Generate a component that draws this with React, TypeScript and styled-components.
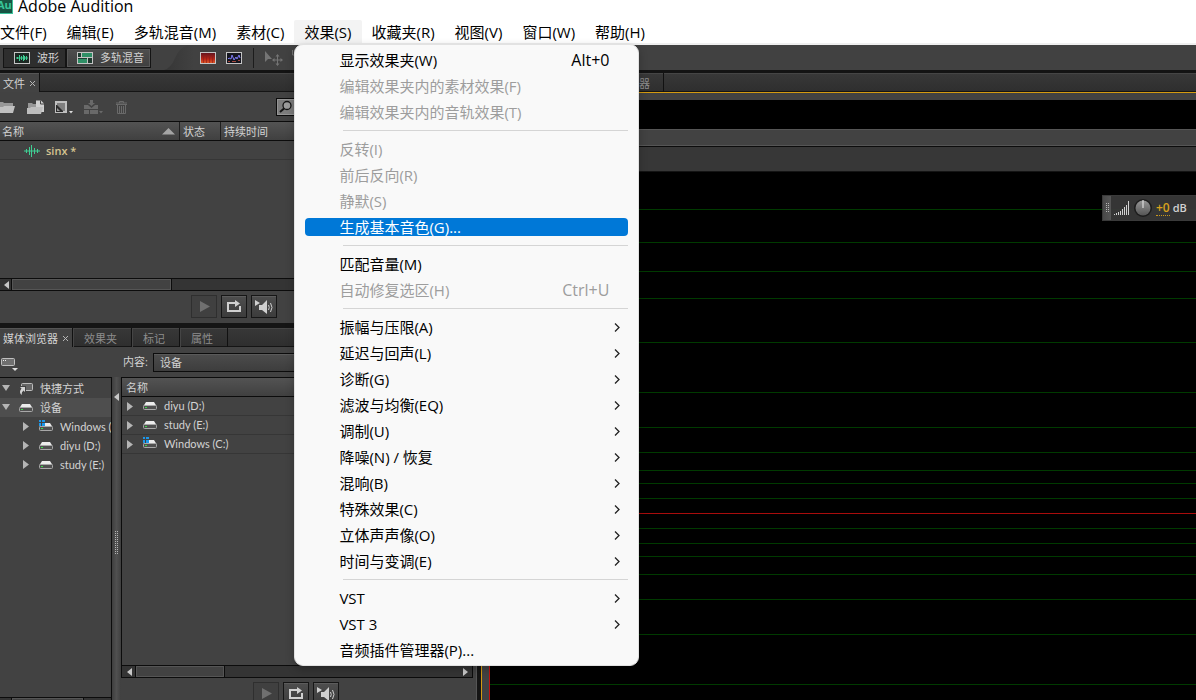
import React from "react";
import styled, { createGlobalStyle, css } from "styled-components";

const GlobalStyle = createGlobalStyle`
  *, *::before, *::after { box-sizing: border-box; }
  body {
    margin: 0;
    background: #424242;
    color: #d2d2d2;
    font: 11px/18px "Open Sans", "Noto Sans CJK SC", sans-serif;
  }
  button, input, select {
    font: inherit;
    color: inherit;
    margin: 0;
    padding: 0;
    border: 0;
    background: none;
  }
  svg { display: block; flex: none; }
  ul { list-style: none; margin: 0; padding: 0; }
`;

const Page = styled.div`
  display: flex;
  flex-direction: column;
  height: 100vh;
  overflow: hidden;
`;

/* Window title and menu bar */

const TitleBar = styled.header`
  display: flex;
  align-items: flex-start;
  gap: 5px;
  flex: none;
  height: 20px;
  background: #fff;
  color: #000;
`;

const AppLogo = styled.svg`
  margin-left: -7px;
`;

const AppName = styled.h1`
  margin: 0;
  font-size: 16px;
  font-weight: 400;
  line-height: 12px;
`;

const MenuBar = styled.nav`
  position: relative;
  z-index: 10;
  flex: none;
  height: 25px;
  background: #fff;
  border-bottom: 2px solid #efefef;
  color: #000;
  font-size: 15px;
`;

const MenuBarList = styled.ul`
  display: flex;
  margin-left: -10px;
`;

const MenuBarItem = styled.li`
  position: relative;
`;

const MenuBarButton = styled.button<{ $open?: boolean }>`
  display: block;
  height: 23px;
  padding: 0 10px;
  line-height: 24px;
  white-space: nowrap;
  border-radius: 2px 2px 0 0;
  background: ${(p) => (p.$open ? "#f3f3f3" : "transparent")};
`;

const DropMenu = styled.ul`
  position: absolute;
  top: 24px;
  left: 0;
  width: 345px;
  padding: 2px 10px;
  border: 1px solid #e2e2e2;
  border-radius: 9px;
  background: #f9f9f9;
  box-shadow: 0 3px 8px rgba(0, 0, 0, 0.25);
`;

const DropRow = styled.li`
  display: flex;
  align-items: center;
  height: 26px;
`;

const DropButton = styled.button<{ $selected?: boolean }>`
  display: flex;
  align-items: center;
  justify-content: space-between;
  width: 100%;
  height: 18px;
  padding: 0 19px 0 34px;
  border-radius: 4px;
  white-space: nowrap;
  &:disabled { color: #9d9d9d; }
  ${(p) => p.$selected && css`
    background: #0078d7;
    color: #fff;
  `}
`;

const ShortcutKeys = styled.span`
  font-size: 16px;
`;

const SubmenuArrow = styled.svg`
  margin-right: -12px;
`;

const DropDivider = styled.li`
  height: 11px;
  padding: 5px 0 5px 38px;
  &::before {
    content: "";
    display: block;
    height: 1px;
    background: #d5d5d5;
  }
`;

/* Application tool bar */

const ToolBar = styled.div`
  display: flex;
  align-items: center;
  flex: none;
  height: 28px;
  padding: 0 3px;
  border-bottom: 3px solid #131313;
  background: #414141;
`;

const ModeGroup = styled.div`
  display: flex;
  align-items: center;
  align-self: stretch;
`;

const ModeButton = styled.button<{ $active?: boolean }>`
  display: flex;
  align-items: center;
  gap: 7px;
  height: 20px;
  padding: 0 6px 0 10px;
  border: 1px solid #141414;
  background: ${(p) => (p.$active ? "#2e2e2e" : "linear-gradient(#4e4e4e, #3f3f3f)")};
  box-shadow: ${(p) => (p.$active ? "none" : "inset 0 0 0 1px #585858")};
`;

const ToolSlope = styled.svg`
  margin: 0 6px 0 13px;
`;

const ToolButton = styled.button`
  display: flex;
  align-items: center;
  margin-right: 10px;
`;

const ToolDivider = styled.span`
  width: 1px;
  height: 20px;
  margin: 0 11px 0 1px;
  background: #1c1c1c;
`;

/* Panels */

const Workspace = styled.main`
  display: flex;
  flex: 1;
  min-height: 0;
`;

const SideColumn = styled.div`
  display: flex;
  flex-direction: column;
  flex: 0 0 481px;
  border-right: 4px solid #151515;
  box-shadow: inset -1px 0 #555;
`;

const TabStrip = styled.div`
  display: flex;
  flex: none;
  height: 19px;
  background: linear-gradient(#383838, #2e2e2e);
  box-shadow: inset 0 1px #454545, inset 0 -1px #151515;
`;

const Tab = styled.button<{ $active?: boolean; $width: number }>`
  display: flex;
  align-items: center;
  gap: 4px;
  width: ${(p) => p.$width}px;
  padding: 2px 0 0 ${(p) => (p.$active ? 3 : 11)}px;
  border-right: 1px solid #111;
  color: ${(p) => (p.$active ? "#d2d2d2" : "#8d8d8d")};
  white-space: nowrap;
  ${(p) => p.$active
    ? css`background: #434343; box-shadow: inset 0 1px #555;`
    : css`box-shadow: inset 1px 1px #454545, inset 0 -1px #151515;`}
`;

const FilesPanel = styled.section`
  display: flex;
  flex-direction: column;
  flex: none;
  height: 255px;
  border-bottom: 5px solid #151515;
`;

const FilesTools = styled.div`
  display: flex;
  align-items: center;
  flex: none;
  height: 29px;
  padding-top: 1px;
`;

const IconButton = styled.button<{ $gap?: number }>`
  margin-right: ${(p) => p.$gap ?? 0}px;
`;

const SearchBox = styled.label`
  display: flex;
  align-items: center;
  width: 197px;
  height: 18px;
  margin: 0 4px 0 auto;
  border: 1px solid #0c0c0c;
  background: #7d7d7d;
  box-shadow: inset 0 0 0 1px #959595;
  input { flex: 1; min-width: 0; outline: 0; color: #111; }
`;

const DataTable = styled.table`
  width: 100%;
  border-collapse: separate;
  border-spacing: 0;
  table-layout: fixed;
`;

const HeadCell = styled.th<{ $width?: number; $inset?: number }>`
  width: ${(p) => (p.$width ? `${p.$width}px` : "auto")};
  height: 20px;
  padding: 1px 4px 0 ${(p) => p.$inset ?? 4}px;
  border-top: 1px solid #0c0c0c;
  border-bottom: 1px solid #0c0c0c;
  background: linear-gradient(#535353, #404040);
  font-weight: 400;
  line-height: 17px;
  text-align: left;
  & + & { box-shadow: inset 1px 0 #1f1f1f; }
`;

const HeadContent = styled.span`
  display: flex;
  align-items: center;
  justify-content: space-between;
`;

const DataCell = styled.td`
  height: 19px;
  padding: 0;
  border-bottom: 1px solid #363636;
`;

const FileName = styled.span`
  display: flex;
  align-items: center;
  gap: 6px;
  padding: 1px 0 0 24px;
  color: #d5c591;
  font-weight: 600;
  line-height: 17px;
`;

const driveText = css`
  display: flex;
  align-items: center;
  gap: 9px;
  font-family: Lato, "Noto Sans CJK SC", sans-serif;
  white-space: nowrap;
  svg + svg { margin-right: -3px; }
`;

const DriveName = styled.span`
  ${driveText}
  padding-left: 3px;
`;

const Filler = styled.div`
  flex: 1;
  min-height: 0;
`;

const ScrollTrack = styled.div`
  display: flex;
  align-items: center;
  flex: none;
  height: 13px;
  border-top: 1px solid #0c0c0c;
  border-bottom: 1px solid #0c0c0c;
  background: #343434;
`;

const ScrollArrow = styled.button<{ $width: number; $end?: boolean }>`
  display: flex;
  align-items: center;
  justify-content: center;
  width: ${(p) => p.$width}px;
  height: 11px;
  margin-left: ${(p) => (p.$end ? "auto" : "0")};
`;

const ScrollThumb = styled.div<{ $width: number }>`
  width: ${(p) => p.$width}px;
  height: 11px;
  border: 1px solid #555;
  background: #424242;
  outline: 1px solid #0c0c0c;
`;

const Transport = styled.div<{ $start: number }>`
  display: flex;
  gap: 4px;
  flex: none;
  height: 32px;
  padding: 4px 0 0 ${(p) => p.$start}px;
`;

const TransportButton = styled.button`
  display: flex;
  align-items: center;
  justify-content: center;
  width: 26px;
  height: 23px;
  border: 1px solid #161616;
  background: linear-gradient(#4e4e4e, #3c3c3c);
  box-shadow: inset 0 1px #5c5c5c;
  &:disabled {
    border-color: #2f2f2f;
    background: #404040;
    box-shadow: none;
  }
`;

const MediaPanel = styled.section`
  display: flex;
  flex-direction: column;
  flex: 1;
  min-height: 0;
`;

const MediaTools = styled.div`
  display: flex;
  align-items: center;
  flex: none;
  height: 30px;
  padding-right: 4px;
  svg { margin: 4px 105px 0 0; }
  label { width: 30px; white-space: nowrap; }
`;

const PlaceSelect = styled.select`
  flex: 1;
  height: 19px;
  padding-left: 6px;
  appearance: none;
  border: 1px solid #0c0c0c;
  border-radius: 0;
  background: linear-gradient(#4c4c4c, #3d3d3d);
  box-shadow: inset 0 1px #5a5a5a;
`;

const MediaBody = styled.div`
  display: flex;
  flex: 1;
  min-height: 0;
  margin-bottom: -10px;
  padding-right: 4px;
`;

const TreeColumn = styled.div`
  display: flex;
  flex-direction: column;
  flex: 0 0 112px;
  padding-top: 1px;
  border-top: 1px solid #0c0c0c;
  border-right: 1px solid #0c0c0c;
  overflow: hidden;
`;

const TreeRow = styled.li<{ $depth?: number; $selected?: boolean }>`
  ${driveText}
  height: 19px;
  padding-left: ${(p) => (p.$depth ? 21 : 1)}px;
  background: ${(p) => (p.$selected ? "#4e4e4e" : "transparent")};
`;

const Splitter = styled.div`
  display: flex;
  flex-direction: column;
  align-items: center;
  gap: 130px;
  flex: 0 0 9px;
  padding-top: 16px;
  background: linear-gradient(90deg, #3e3e3e, #505050 50%, #404040);
`;

const ListColumn = styled.div`
  display: flex;
  flex-direction: column;
  flex: 1;
  min-width: 0;
`;

const ListBox = styled.div`
  display: flex;
  flex-direction: column;
  flex: 1;
  min-height: 0;
  border-left: 1px solid #0c0c0c;
  border-right: 1px solid #0c0c0c;
`;

/* Editor */

const EditorColumn = styled.section`
  display: flex;
  flex-direction: column;
  flex: 1;
  min-width: 0;
`;

const EditorBody = styled.div`
  display: flex;
  flex-direction: column;
  flex: 1;
  min-height: 0;
  padding: 7px 0 0 7px;
  border: solid #d39a10;
  border-width: 1px 0 0 1px;
`;

const Overview = styled.div`
  flex: none;
  height: 29px;
  background: #000;
`;

const RangeBar = styled.div`
  flex: none;
  height: 18px;
  border-top: 1px solid #555;
  border-bottom: 1px solid #0c0c0c;
  background: #424242;
  box-shadow: inset 0 -1px #555;
`;

const TimeRuler = styled.div`
  flex: none;
  height: 25px;
  border-bottom: 1px solid #141414;
  background: #373737;
`;

const WaveArea = styled.div`
  position: relative;
  flex: 1;
  min-height: 0;
  border-left: 1px solid #c01010;
  background: #000;
  overflow: hidden;
`;

const GainHud = styled.div`
  position: absolute;
  top: 23px;
  right: 0;
  display: flex;
  align-items: center;
  gap: 3px;
  width: 94px;
  height: 26px;
  border: 1px solid #3a3a3a;
  border-right: 0;
  background: rgba(56, 56, 56, 0.94);
  font-weight: 600;
`;

const HudHandle = styled.div`
  display: flex;
  align-items: center;
  justify-content: center;
  width: 8px;
  height: 24px;
  background: linear-gradient(90deg, #484848, #565656);
`;

const Gain = styled.button`
  border-bottom: 1px dotted #c9991c;
  color: #d9a21c;
  font-size: 12px;
  line-height: 14px;
`;

/* Icons */

const Close = () => (
  <svg width="7" height="7" viewBox="0 0 7 7" stroke="#b5b5b5" strokeWidth="1" fill="none">
    <path d="M1 1l5 5M6 1l-5 5" />
  </svg>
);

const WaveIcon = () => (
  <svg width="16" height="12" viewBox="0 0 16 12">
    <rect x=".5" y=".5" width="15" height="11" fill="#1c2823" stroke="#c4c4c4" />
    <path d="M2 6h12M3.500 5v2M5.500 3v6M7.500 4v4M9.500 3v6M10.500 4v4M12.500 4v4" stroke="#3fcf94" fill="none" />
  </svg>
);

const MultitrackIcon = () => (
  <svg width="16" height="12" viewBox="0 0 16 12">
    <path d="M0 0h16v12H0z" fill="#c4c4c4" />
    <path d="M1 1h14v10H1z" fill="#1f3a30" />
    <path d="M5 1h10v4H5zM1 7h9v4H1z" fill="#2f8f66" />
    <path d="M0 5.500h16M4.500 1v4M10.500 6v5" stroke="#c4c4c4" />
  </svg>
);

const SpectrumIcon = () => (
  <svg width="16" height="12" viewBox="0 0 16 12">
    <defs>
      <linearGradient id="heat" x1="0" y1="0" x2="0" y2="1">
        <stop offset="0" stopColor="#5e1420" />
        <stop offset=".6" stopColor="#b82718" />
        <stop offset="1" stopColor="#e2602a" />
      </linearGradient>
    </defs>
    <rect x=".5" y=".5" width="15" height="11" fill="url(#heat)" stroke="#c4c4c4" />
    <path d="M3.500 4v7M6.500 3v8M9.500 5v6M12.500 3v8" stroke="#8b1c1c" opacity=".6" />
  </svg>
);

const PitchIcon = () => (
  <svg width="16" height="12" viewBox="0 0 16 12">
    <rect x=".5" y=".5" width="15" height="11" fill="#15161f" stroke="#c4c4c4" />
    <path d="M2 7l1-1 2 1 1-4 2 5 2-3 1 2 2-4 1 3" stroke="#7c79f2" fill="none" />
    <path d="M2 9.500h2M6 9.500h4M12 8.500h2" stroke="#a5483c" />
  </svg>
);

const MoveToolIcon = () => (
  <svg width="30" height="16" viewBox="0 0 30 16">
    <path d="M0 1v11l3-3h4z" fill="#747474" />
    <path d="M12.500 6v8M8.500 10h8" stroke="#747474" />
    <path d="M12.500 4l-2 2.500h4zM12.500 16l-2-2.500h4zM7 10l2.500-2v4zM18 10l-2.500-2v4z" fill="#747474" />
    <path d="M27.500 0v5h3" stroke="#747474" fill="none" />
  </svg>
);

const OpenIcon = () => (
  <svg width="16" height="14" viewBox="0 0 16 14">
    <path d="M0 2h3l1 1h9v4H0z" fill="#979797" />
    <path d="M0 7h3l1-1h11l-2 7H0z" fill="#c0c0c0" />
  </svg>
);

const ImportIcon = () => (
  <svg width="18" height="15" viewBox="0 0 18 15">
    <path d="M1 3h4l1 1h4v6H1z" fill="#979797" />
    <path d="M9 .5h5l3 3V12H9z" fill="#cfcfcf" />
    <path d="M13.500 .5V4H17" stroke="#444" fill="none" />
    <path d="M0 8h3l1-1h12l-2 7H0z" fill="#bdbdbd" />
  </svg>
);

const NewFileIcon = () => (
  <svg width="18" height="14" viewBox="0 0 18 14">
    <path d="M0 1h12v12H0z" fill="#c0c0c0" />
    <path d="M2 3h8v8H2z" fill="#7f7f7f" />
    <path d="M1 5h1l6 6v1H1z" fill="#2c2c2c" />
    <path d="M2 8v3h3z" fill="#9a9a9a" />
    <path d="M14 11h4l-2 2.500z" fill="#ddd" />
  </svg>
);

const InsertIcon = () => (
  <svg width="19" height="14" viewBox="0 0 19 14" fill="#696969">
    <path d="M6 0h3v3h2L7.500 6 4 3h2zM0 5h4l3.500 3L11 5h3v4H0zM0 10h5v4H0zM6 10h8v4H6zM15 11h4l-2 2.500z" />
  </svg>
);

const TrashIcon = () => (
  <svg width="11" height="13" viewBox="0 0 11 13" stroke="#6a6a6a" fill="none">
    <path d="M0 3.500h11M0 2h11M3.500 2V.5h4V2M1.500 4v8.500h8V4M3.500 5v7M5.500 5v7M7.500 5v7" />
  </svg>
);

const SearchIcon = () => (
  <svg width="17" height="16" viewBox="0 0 17 16" fill="none" stroke="#151515">
    <circle cx="10" cy="6.500" r="4" strokeWidth="1.300" fill="#9c9c9c" />
    <path d="M7 9.500L3 13" strokeWidth="2" />
  </svg>
);

const ClipIcon = () => (
  <svg width="16" height="12" viewBox="0 0 16 12">
    <path d="M0 6h16M2.500 4v4M5.500 2v8M7.500 0v12M10.500 3v6M13.500 4v4" stroke="#3fcf94" fill="none" />
  </svg>
);

const SortIcon = () => (
  <svg width="13" height="7" viewBox="0 0 13 7">
    <path d="M0 6.500L6.500 0 13 6.500z" fill="#a5a5a5" />
  </svg>
);

const ArrowLeft = () => (
  <svg width="5" height="8" viewBox="0 0 5 8"><path d="M5 0v8L0 4z" fill="#c8c8c8" /></svg>
);

const ArrowRight = () => (
  <svg width="5" height="8" viewBox="0 0 5 8"><path d="M0 0v8l5-4z" fill="#c8c8c8" /></svg>
);

const Collapsed = () => (
  <svg width="9" height="9" viewBox="0 0 9 9"><path d="M2 0v9l6-4.500z" fill="#b5b5b5" /></svg>
);

const Expanded = () => (
  <svg width="9" height="7" viewBox="0 0 9 7"><path d="M1 0h8L5 6z" fill="#b5b5b5" /></svg>
);

const PlayIcon = () => (
  <svg width="11" height="11" viewBox="0 0 11 11"><path d="M1 0v11l10-5.500z" fill="#707070" /></svg>
);

const LoopIcon = () => (
  <svg width="16" height="13" viewBox="0 0 16 13">
    <path d="M6 3H2v8h12V6" fill="none" stroke="#d0d0d0" strokeWidth="2" />
    <path d="M5 2h4V0l5 3.500L9 7V4H5z" fill="#d0d0d0" />
  </svg>
);

const SpeakerIcon = () => (
  <svg width="18" height="14" viewBox="0 0 18 14">
    <path d="M0 0l5 3-5 3zM4 5h3l5-5v14l-5-4H4z" fill="#d0d0d0" />
    <path d="M13.500 5q1.500 2.500 0 5M15.500 3q3 4.500 0 9" fill="none" stroke="#d0d0d0" />
  </svg>
);

const DriveMenuIcon = () => (
  <svg width="18" height="13" viewBox="0 0 18 13">
    <rect x="1.500" y=".5" width="13" height="7" rx="1" fill="#6f6f6f" stroke="#c0c0c0" />
    <path d="M3 2.500h1M5 2.500h1" stroke="#eee" />
    <path d="M12 10h6l-3 3z" fill="#ddd" />
  </svg>
);

const ShortcutIcon = () => (
  <svg width="15" height="12" viewBox="0 0 15 12">
    <rect x="2.500" y=".5" width="11" height="7" rx="1" fill="#666" stroke="#bdbdbd" />
    <path d="M0 3h7v7H0z" fill="#424242" />
    <path d="M1 4h5v5L4.500 7.500Q2.500 8.500 2.500 12-.5 9 2.500 5.500z" fill="#d5d5d5" />
  </svg>
);

const DriveIcon = ({ system = false }: { system?: boolean }) => (
  <svg width="15" height="14" viewBox="0 0 15 14">
    <path d="M3 3h8l2.500 4H.5z" fill="#ececec" />
    <rect x=".5" y="6.500" width="13" height="4" rx="1" fill="#505050" stroke="#a8a8a8" />
    <path d="M2 8.500h2" stroke="#3ddc4a" />
    {system && (
      <>
        <path d="M0 0h6v6H0z" fill="#424242" />
        <path d="M0 0h2v2H0zM3 0h3v2H3zM0 3h2v3H0zM3 3h3v3H3z" fill="#1c97ea" />
      </>
    )}
  </svg>
);

const Dots = ({ rows }: { rows: number }) => (
  <svg width="3" height={rows * 2} viewBox={`0 0 3 ${rows * 2}`}>
    <path d={`M.5 0V${rows * 2}M2.500 0V${rows * 2}`} stroke="#b5b5b5" strokeDasharray="1 1" />
  </svg>
);

const LevelIcon = () => (
  <svg width="16" height="14" viewBox="0 0 16 14">
    <path
      d="M.5 13v1M2.500 12v2M4.500 11v3M6.500 10v4M8.500 8v6M10.500 6v8M12.500 4v10M14.500 0v14"
      stroke="#d0d0d0"
    />
  </svg>
);

const KnobIcon = () => (
  <svg width="20" height="20" viewBox="0 0 20 20">
    <defs>
      <linearGradient id="knob" x1="0" y1="0" x2="0" y2="1">
        <stop offset="0" stopColor="#969696" />
        <stop offset="1" stopColor="#555" />
      </linearGradient>
    </defs>
    <circle cx="10" cy="10" r="9" fill="#1d1d1d" />
    <circle cx="10" cy="10" r="7.500" fill="url(#knob)" />
    <path d="M10 2v8" stroke="#eee" />
  </svg>
);

/* Content */

type Entry = { label: string; keys?: string; off?: boolean; sub?: boolean; selected?: boolean };

const effectGroups: Entry[][] = [
  [
    { label: "显示效果夹(W)", keys: "Alt+0" },
    { label: "编辑效果夹内的素材效果(F)", off: true },
    { label: "编辑效果夹内的音轨效果(T)", off: true },
  ],
  [
    { label: "反转(I)", off: true },
    { label: "前后反向(R)", off: true },
    { label: "静默(S)", off: true },
    { label: "生成基本音色(G)...", selected: true },
  ],
  [
    { label: "匹配音量(M)" },
    { label: "自动修复选区(H)", keys: "Ctrl+U", off: true },
  ],
  [
    { label: "振幅与压限(A)", sub: true },
    { label: "延迟与回声(L)", sub: true },
    { label: "诊断(G)", sub: true },
    { label: "滤波与均衡(EQ)", sub: true },
    { label: "调制(U)", sub: true },
    { label: "降噪(N) / 恢复", sub: true },
    { label: "混响(B)", sub: true },
    { label: "特殊效果(C)", sub: true },
    { label: "立体声声像(O)", sub: true },
    { label: "时间与变调(E)", sub: true },
  ],
  [
    { label: "VST", sub: true },
    { label: "VST 3", sub: true },
    { label: "音频插件管理器(P)..." },
  ],
];

const menus = [
  "文件(F)", "编辑(E)", "多轨混音(M)", "素材(C)", "效果(S)",
  "收藏夹(R)", "视图(V)", "窗口(W)", "帮助(H)",
];

const levelLines = [38, 71, 100, 127, 171, 221, 256, 281, 299, 312, 327, 357, 372, 385, 403, 428, 463, 513];

const EffectsMenu = () => (
  <DropMenu role="menu">
    {effectGroups.map((group, index) => (
      <React.Fragment key={index}>
        {index > 0 && <DropDivider role="separator" />}
        {group.map((entry) => (
          <DropRow key={entry.label} role="none">
            <DropButton role="menuitem" disabled={entry.off} $selected={entry.selected}>
              <span>{entry.label}</span>
              {entry.keys && <ShortcutKeys>{entry.keys}</ShortcutKeys>}
              {entry.sub && (
                <SubmenuArrow width="8" height="9" viewBox="0 0 8 9" fill="none" stroke="#222" strokeWidth="1.300">
                  <path d="M2 .5l4 4-4 4" />
                </SubmenuArrow>
              )}
            </DropButton>
          </DropRow>
        ))}
      </React.Fragment>
    ))}
  </DropMenu>
);

const TransportButtons = ({ start }: { start: number }) => (
  <Transport $start={start}>
    <TransportButton disabled aria-label="播放"><PlayIcon /></TransportButton>
    <TransportButton aria-label="循环"><LoopIcon /></TransportButton>
    <TransportButton aria-label="自动播放"><SpeakerIcon /></TransportButton>
  </Transport>
);

const HorizontalScroll = ({ thumb, arrow = 12 }: { thumb: number; arrow?: number }) => (
  <ScrollTrack>
    <ScrollArrow $width={arrow} aria-label="向左"><ArrowLeft /></ScrollArrow>
    <ScrollThumb $width={thumb} />
    <ScrollArrow $width={14} $end aria-label="向右"><ArrowRight /></ScrollArrow>
  </ScrollTrack>
);

const Files = () => (
  <FilesPanel>
    <TabStrip role="tablist">
      <Tab role="tab" $active $width={40}>文件<Close /></Tab>
    </TabStrip>
    <FilesTools>
      <IconButton $gap={11} aria-label="打开"><OpenIcon /></IconButton>
      <IconButton $gap={10} aria-label="导入"><ImportIcon /></IconButton>
      <IconButton $gap={11} aria-label="新建"><NewFileIcon /></IconButton>
      <IconButton $gap={13} aria-label="插入"><InsertIcon /></IconButton>
      <IconButton aria-label="删除"><TrashIcon /></IconButton>
      <SearchBox><SearchIcon /><input type="text" aria-label="搜索" /></SearchBox>
    </FilesTools>
    <DataTable>
      <thead>
        <tr>
          <HeadCell $width={179} $inset={2}><HeadContent>名称<SortIcon /></HeadContent></HeadCell>
          <HeadCell $width={41}>状态</HeadCell>
          <HeadCell>持续时间</HeadCell>
        </tr>
      </thead>
      <tbody>
        <tr>
          <DataCell><FileName><ClipIcon />sinx *</FileName></DataCell>
          <DataCell />
          <DataCell />
        </tr>
      </tbody>
    </DataTable>
    <Filler />
    <HorizontalScroll thumb={159} />
    <TransportButtons start={191} />
  </FilesPanel>
);

const MediaBrowser = () => (
  <MediaPanel>
    <TabStrip role="tablist">
      <Tab role="tab" $active $width={73}>媒体浏览器<Close /></Tab>
      <Tab role="tab" $width={59}>效果夹</Tab>
      <Tab role="tab" $width={48}>标记</Tab>
      <Tab role="tab" $width={48}>属性</Tab>
    </TabStrip>
    <MediaTools>
      <DriveMenuIcon />
      <label htmlFor="place">内容:</label>
      <PlaceSelect id="place" defaultValue="设备"><option>设备</option></PlaceSelect>
    </MediaTools>
    <MediaBody>
      <TreeColumn>
        <ul>
          <TreeRow><Expanded /><ShortcutIcon />快捷方式</TreeRow>
          <TreeRow $selected><Expanded /><DriveIcon />设备</TreeRow>
          <TreeRow $depth={1}><Collapsed /><DriveIcon system />Windows (C:)</TreeRow>
          <TreeRow $depth={1}><Collapsed /><DriveIcon />diyu (D:)</TreeRow>
          <TreeRow $depth={1}><Collapsed /><DriveIcon />study (E:)</TreeRow>
        </ul>
        <Filler />
        <HorizontalScroll thumb={71} />
      </TreeColumn>
      <Splitter>
        <ArrowLeft />
        <Dots rows={12} />
      </Splitter>
      <ListColumn>
        <ListBox>
          <DataTable>
            <thead>
              <tr><HeadCell>名称</HeadCell></tr>
            </thead>
            <tbody>
              <tr><DataCell><DriveName><Collapsed /><DriveIcon />diyu (D:)</DriveName></DataCell></tr>
              <tr><DataCell><DriveName><Collapsed /><DriveIcon />study (E:)</DriveName></DataCell></tr>
              <tr><DataCell><DriveName><Collapsed /><DriveIcon system />Windows (C:)</DriveName></DataCell></tr>
            </tbody>
          </DataTable>
          <Filler />
          <HorizontalScroll thumb={88} arrow={14} />
        </ListBox>
        <TransportButtons start={132} />
      </ListColumn>
    </MediaBody>
  </MediaPanel>
);

const Editor = () => (
  <EditorColumn>
    <TabStrip role="tablist">
      <Tab role="tab" $active $width={125} aria-label="编辑器" />
      <Tab role="tab" $width={58}>混音器</Tab>
    </TabStrip>
    <EditorBody>
      <Overview />
      <RangeBar />
      <TimeRuler />
      <WaveArea>
        <svg width="100%" height="530">
          {levelLines.map((y) => (
            <rect key={y} x="0" y={y - 1} width="100%" height="1" fill="#003a00" />
          ))}
          <rect x="0" y="341" width="100%" height="1" fill="#a80c0c" />
        </svg>
        <GainHud>
          <HudHandle><Dots rows={5} /></HudHandle>
          <LevelIcon />
          <KnobIcon />
          <Gain>+0</Gain>
          <span>dB</span>
        </GainHud>
      </WaveArea>
    </EditorBody>
  </EditorColumn>
);

export default function App() {
  return (
    <Page>
      <GlobalStyle />
      <TitleBar>
        <AppLogo width="20" height="14" viewBox="0 0 20 14">
          <rect x="0" y="-6" width="20" height="20" fill="#3cc29b" />
          <rect x="1" y="-5" width="18" height="18" fill="#175443" />
          <text x="4" y="9" fontSize="11" fontWeight="700" fill="#37c79b">Au</text>
        </AppLogo>
        <AppName>Adobe Audition</AppName>
      </TitleBar>
      <MenuBar>
        <MenuBarList>
          {menus.map((name) => (
            <MenuBarItem key={name}>
              <MenuBarButton $open={name === "效果(S)"}>{name}</MenuBarButton>
              {name === "效果(S)" && <EffectsMenu />}
            </MenuBarItem>
          ))}
        </MenuBarList>
      </MenuBar>
      <ToolBar>
        <ModeGroup>
          <ModeButton $active><WaveIcon />波形</ModeButton>
          <ModeButton><MultitrackIcon />多轨混音</ModeButton>
        </ModeGroup>
        <ToolSlope width="30" height="25" viewBox="0 0 30 25">
          <defs>
            <linearGradient id="slope" x1="0" y1="0" x2="1" y2="0">
              <stop offset="0" stopColor="#363636" />
              <stop offset="1" stopColor="#414141" />
            </linearGradient>
          </defs>
          <path d="M0 25Q7 23 11 13T24 0h6v25z" fill="url(#slope)" />
        </ToolSlope>
        <ToolButton aria-label="频谱"><SpectrumIcon /></ToolButton>
        <ToolButton aria-label="音高"><PitchIcon /></ToolButton>
        <ToolDivider />
        <ToolButton aria-label="移动"><MoveToolIcon /></ToolButton>
      </ToolBar>
      <Workspace>
        <SideColumn>
          <Files />
          <MediaBrowser />
        </SideColumn>
        <Editor />
      </Workspace>
    </Page>
  );
}
